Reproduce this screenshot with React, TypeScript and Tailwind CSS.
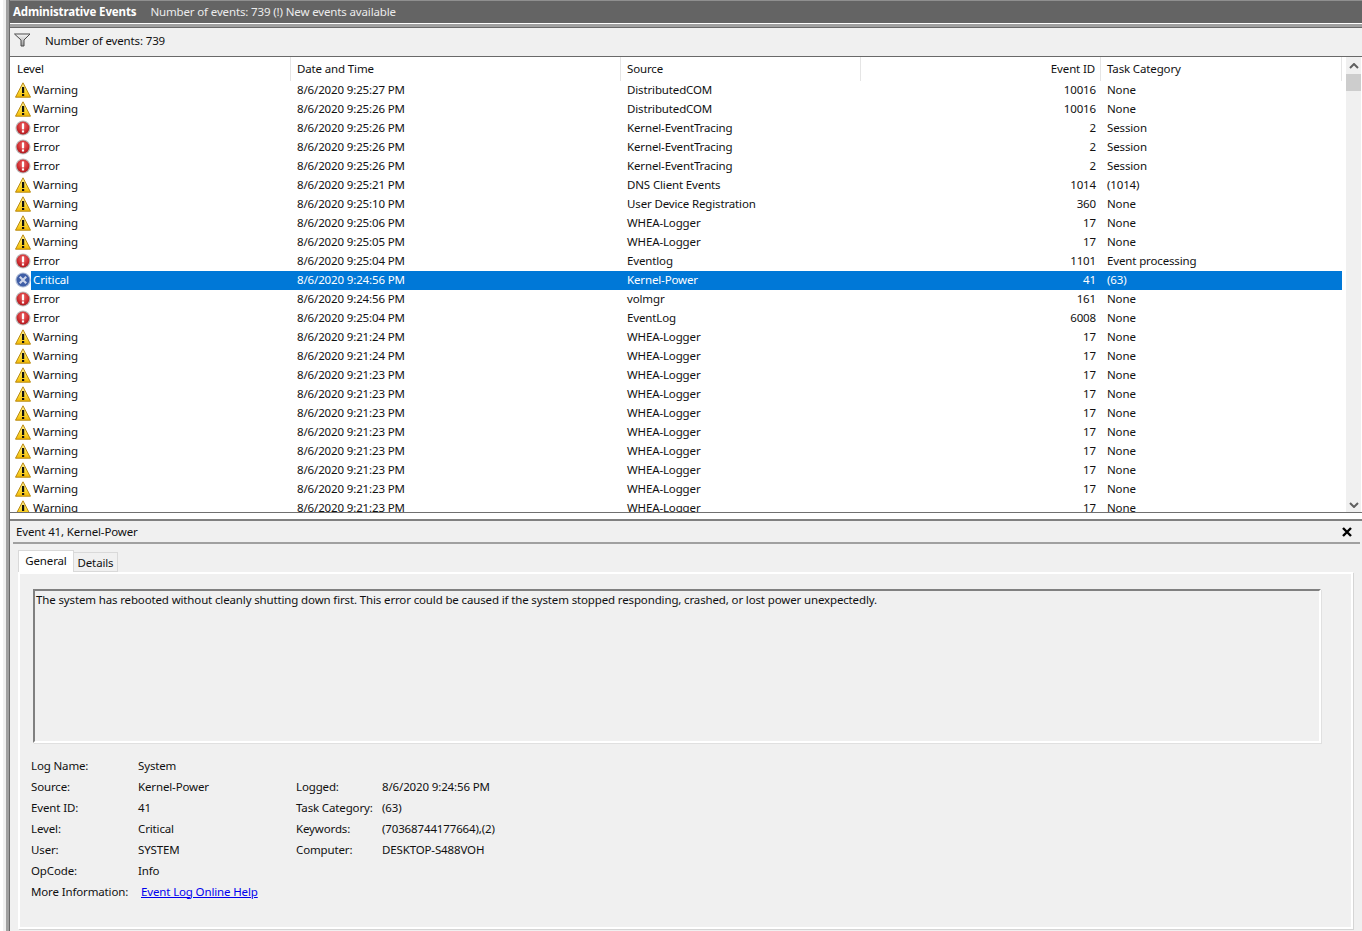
type Row = [string, string, string, string, string];
const W = "Warning", E = "Error";
const rows: Row[] = [
  [W, "8/6/2020 9:25:27 PM", "DistributedCOM", "10016", "None"],
  [W, "8/6/2020 9:25:26 PM", "DistributedCOM", "10016", "None"],
  [E, "8/6/2020 9:25:26 PM", "Kernel-EventTracing", "2", "Session"],
  [E, "8/6/2020 9:25:26 PM", "Kernel-EventTracing", "2", "Session"],
  [E, "8/6/2020 9:25:26 PM", "Kernel-EventTracing", "2", "Session"],
  [W, "8/6/2020 9:25:21 PM", "DNS Client Events", "1014", "(1014)"],
  [W, "8/6/2020 9:25:10 PM", "User Device Registration", "360", "None"],
  [W, "8/6/2020 9:25:06 PM", "WHEA-Logger", "17", "None"],
  [W, "8/6/2020 9:25:05 PM", "WHEA-Logger", "17", "None"],
  [E, "8/6/2020 9:25:04 PM", "Eventlog", "1101", "Event processing"],
  ["Critical", "8/6/2020 9:24:56 PM", "Kernel-Power", "41", "(63)"],
  [E, "8/6/2020 9:24:56 PM", "volmgr", "161", "None"],
  [E, "8/6/2020 9:25:04 PM", "EventLog", "6008", "None"],
  [W, "8/6/2020 9:21:24 PM", "WHEA-Logger", "17", "None"],
  [W, "8/6/2020 9:21:24 PM", "WHEA-Logger", "17", "None"],
  [W, "8/6/2020 9:21:23 PM", "WHEA-Logger", "17", "None"],
  [W, "8/6/2020 9:21:23 PM", "WHEA-Logger", "17", "None"],
  [W, "8/6/2020 9:21:23 PM", "WHEA-Logger", "17", "None"],
  [W, "8/6/2020 9:21:23 PM", "WHEA-Logger", "17", "None"],
  [W, "8/6/2020 9:21:23 PM", "WHEA-Logger", "17", "None"],
  [W, "8/6/2020 9:21:23 PM", "WHEA-Logger", "17", "None"],
  [W, "8/6/2020 9:21:23 PM", "WHEA-Logger", "17", "None"],
  [W, "8/6/2020 9:21:23 PM", "WHEA-Logger", "17", "None"],
];

function LevelIcon({ level }: { level: string }) {
  if (level === "Warning")
    return (
      <svg width="16" height="16" viewBox="0 0 16 16" className="shrink-0 mt-[-1px]">
        <defs>
          <linearGradient id="wg" x1="0" y1="0" x2="0" y2="1">
            <stop offset="0" stopColor="#fff2a0" />
            <stop offset="0.6" stopColor="#fcd932" />
            <stop offset="1" stopColor="#f2b705" />
          </linearGradient>
        </defs>
        <path d="M8 0.8 L15.5 15.2 L0.5 15.2 Z" fill="url(#wg)" stroke="#b98a12" strokeWidth="1" strokeLinejoin="round" />
        <rect x="7" y="5" width="2.2" height="6" fill="#111" />
        <rect x="7" y="12" width="2.2" height="2" fill="#111" />
      </svg>
    );
  if (level === "Error")
    return (
      <svg width="16" height="16" viewBox="0 0 16 16" className="shrink-0 mt-[-1px]">
        <defs>
          <radialGradient id="eg" cx="0.5" cy="0.35" r="0.75">
            <stop offset="0" stopColor="#ef6a6a" />
            <stop offset="0.6" stopColor="#cc2a2e" />
            <stop offset="1" stopColor="#9c1418" />
          </radialGradient>
        </defs>
        <circle cx="8" cy="8" r="7.6" fill="#bdbdbd" />
        <circle cx="8" cy="8" r="6.4" fill="url(#eg)" />
        <rect x="6.9" y="3.4" width="2.2" height="6" fill="#fff" />
        <rect x="6.9" y="10.4" width="2.2" height="2.1" fill="#fff" />
      </svg>
    );
  return (
    <svg width="16" height="16" viewBox="0 0 16 16" className="shrink-0 mt-[-1px]">
      <circle cx="8" cy="8" r="7.6" fill="#aebbd6" />
      <circle cx="8" cy="8" r="6.4" fill="#3f5ea6" />
      <path d="M4.8 4.8 L11.2 11.2 M11.2 4.8 L4.8 11.2" stroke="#cfd6ea" strokeWidth="2.2" />
    </svg>
  );
}

export default function App() {
  return (
    <div className="w-[1362px] h-[931px] overflow-hidden flex bg-[#f0f0f0] text-[11.5px] tracking-[-0.14px] leading-[16px] text-[#111111] font-['Noto_Sans','Open_Sans',sans-serif]">
      <div className="w-[10px] shrink-0 flex bg-white">
        <div className="w-[3px] bg-white" />
        <div className="w-[3px] bg-[#f0f0f0]" />
        <div className="w-[3px] bg-[#a0a0a0]" />
        <div className="w-[1px] bg-[#696969]" />
      </div>
      <div className="flex-1 min-w-0 flex flex-col">
        <div className="h-[23px] bg-[#646464] border-t border-[#8f8f8f] flex items-center text-white pl-[3px] pb-[1px]">
          <span className="font-bold">Administrative Events</span>
          <span className="ml-[14px] text-[#ececec]">Number of events: 739 (!) New events available</span>
        </div>
        <div className="h-[5px] bg-[#a0a0a0] border-t border-white border-b-[1px] border-b-[#696969]" />
        <div className="h-[29px] flex items-center border-b border-[#696969] pl-[4px] pb-[2px]">
          <svg width="17" height="14" viewBox="0 0 17 14" className="shrink-0 mt-[-3px]">
            <defs>
              <linearGradient id="fg" x1="0" y1="0" x2="0" y2="1">
                <stop offset="0" stopColor="#f8f8f8" />
                <stop offset="1" stopColor="#9a9a9a" />
              </linearGradient>
            </defs>
            <path d="M0.5 1 H16 L10 7 V13 H7 V7 Z" fill="url(#fg)" stroke="#4a4a4a" />
          </svg>
          <span className="ml-[14px]">Number of events: 739</span>
        </div>
        <div className="h-[456px] flex bg-white border-b border-[#707070] overflow-hidden">
          <div className="w-[1332px] shrink-0 overflow-hidden">
            <div className="grid grid-cols-[280px_330px_240px_240px_241px] h-[24px] pl-[1px]">
              {["Level", "Date and Time", "Source", "Event ID", "Task Category"].map((h, i) => (
                <div key={h} className={"h-[24px] border-r border-[#e5e5e5] flex items-center px-[6px] pb-[1px] " + (i === 3 ? "justify-end pr-[5px]" : "")}>{h}</div>
              ))}
            </div>
            {rows.map((r, i) => {
              const sel = r[0] === "Critical";
              return (
                <div key={i} className="h-[19px] flex items-center">
                  <div className="w-[5px] shrink-0" />
                  <LevelIcon level={r[0]} />
                  <div className={"flex-1 h-[19px] pb-[2px] grid grid-cols-[260px_330px_240px_240px_241px] items-center " + (sel ? "bg-[#0078d7] text-white" : "")}>
                    <div className="pl-[2px]">{r[0]}</div>
                    <div className="pl-[6px]">{r[1]}</div>
                    <div className="pl-[6px]">{r[2]}</div>
                    <div className="text-right pr-[5px]">{r[3]}</div>
                    <div className="pl-[6px]">{r[4]}</div>
                  </div>
                </div>
              );
            })}
          </div>
          <div className="w-[4px] shrink-0" />
          <div className="w-[15px] shrink-0 bg-[#f0f0f0] flex flex-col items-center">
            <div className="h-[17px] flex items-center justify-center">
              <svg width="10" height="6" viewBox="0 0 10 6"><path d="M1 5 L5 1 L9 5" fill="none" stroke="#606060" strokeWidth="2" /></svg>
            </div>
            <div className="w-[15px] h-[17px] bg-[#cdcdcd]" />
            <div className="flex-1" />
            <div className="h-[15px] flex items-center justify-center">
              <svg width="10" height="6" viewBox="0 0 10 6"><path d="M1 1 L5 5 L9 1" fill="none" stroke="#606060" strokeWidth="2" /></svg>
            </div>
          </div>
        </div>
        <div className="h-[8px] bg-white border-b-2 border-[#808080]" />
        <div className="flex-1 min-h-0 flex flex-col">
          <div className="h-[22px] flex items-center justify-between pl-[6px] pr-[10px]">
            <span>Event 41, Kernel-Power</span>
            <svg width="10" height="10" viewBox="0 0 10 10"><path d="M1 1 L9 9 M9 1 L1 9" stroke="#000" strokeWidth="2.4" /></svg>
          </div>
          <div className="h-[2px] bg-[#a0a0a0] ml-[3px] mr-[2px] mt-[-1px]" />
          <div className="flex h-[28px] pl-[8px] items-end">
            <div className="h-[22px] w-[56px] bg-white border border-b-0 border-[#d9d9d9] flex items-center justify-center pb-[1px]">General</div>
            <div className="h-[20px] w-[44px] border border-l-0 border-[#d9d9d9] flex items-center justify-center pt-[2px]">Details</div>
          </div>
          <div className="flex-1 min-h-0 ml-[8px] mr-[9px] mb-[2px] border-2 border-white shadow-[1px_1px_0_#d5d5d5] px-[13px] pt-[15px]">
            <div className="h-[154px] w-[1288px] border-t-2 border-l-2 border-[#808080] border-r-2 border-b-2 border-r-white border-b-white bg-[#f0f0f0] pl-[1px] pt-[1px] shadow-[1px_1px_0_#e0e0e0]">
              The system has rebooted without cleanly shutting down first. This error could be caused if the system stopped responding, crashed, or lost power unexpectedly.
            </div>
            <div className="mt-[12px] ml-[-2px] grid grid-cols-[107px_158px_86px_1fr] auto-rows-[21px] items-center">
              <div>Log Name:</div><div>System</div><div /><div />
              <div>Source:</div><div>Kernel-Power</div><div>Logged:</div><div>8/6/2020 9:24:56 PM</div>
              <div>Event ID:</div><div>41</div><div>Task Category:</div><div>(63)</div>
              <div>Level:</div><div>Critical</div><div>Keywords:</div><div>(70368744177664),(2)</div>
              <div>User:</div><div>SYSTEM</div><div>Computer:</div><div>DESKTOP-S488VOH</div>
              <div>OpCode:</div><div>Info</div><div /><div />
              <div>More Information:</div><div className="pl-[3px]"><a className="text-[#0000ee] underline">Event Log Online Help</a></div><div /><div />
            </div>
          </div>
        </div>
      </div>
    </div>
  );
}
